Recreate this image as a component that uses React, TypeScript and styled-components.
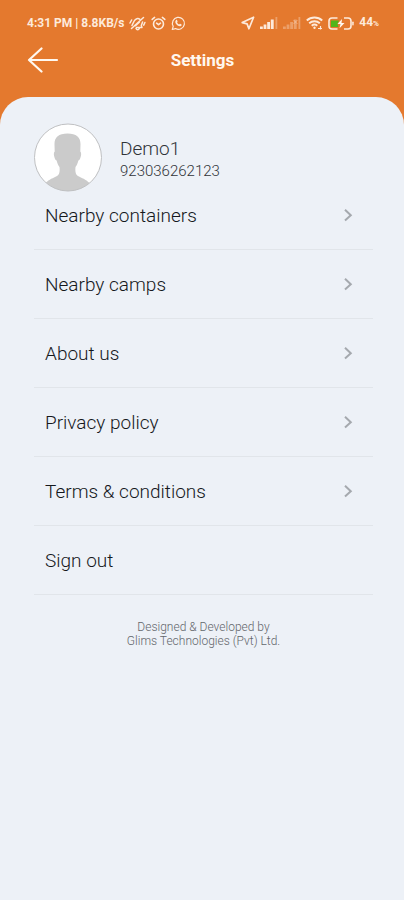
import React from "react";
import styled, { createGlobalStyle } from "styled-components";

const GlobalStyle = createGlobalStyle`
  *, *::before, *::after { box-sizing: border-box; }
  body {
    margin: 0;
    background: #e4792e;
    font-family: Roboto, "Liberation Sans", sans-serif;
  }
`;

const Screen = styled.div`
  min-height: 100vh;
  display: flex;
  flex-direction: column;
  background: #e4792e;
`;

const StatusBar = styled.div`
  display: flex;
  align-items: center;
  justify-content: space-between;
  height: 29px;
  padding: 17px 25px 0 27px;
  color: #fdeadb;
  font-size: 12px;
  font-weight: 700;
  line-height: 14px;
`;

const StatusGroup = styled.div`
  display: flex;
  align-items: center;
  gap: 5px;
  white-space: nowrap;

  svg { display: block; flex: none; }
`;

const Percent = styled.small`
  font-size: 8px;
`;

const TopBar = styled.header`
  display: grid;
  grid-template-columns: 32px 1fr 32px;
  align-items: center;
  height: 68px;
  padding: 0 26px 6px 27px;
`;

const BackButton = styled.button`
  display: flex;
  padding: 0;
  border: 0;
  background: none;
  cursor: pointer;
`;

const Title = styled.h1`
  margin: 0;
  color: #fff8f0;
  font-size: 17px;
  font-weight: 700;
  line-height: 24px;
  text-align: center;
`;

const Sheet = styled.main`
  flex: 1;
  padding: 26px 31px 40px 34px;
  border-radius: 28px 28px 0 0;
  background: #edf1f7;
`;

const Profile = styled.section`
  display: flex;
  align-items: center;
  gap: 18px;
`;

const Avatar = styled.svg`
  display: block;
  flex: none;
  width: 68px;
  height: 69px;
`;

const ProfileText = styled.div`
  padding-top: 2px;
`;

const Name = styled.h2`
  margin: 0;
  color: #303338;
  font-size: 19px;
  font-weight: 300;
  line-height: 24px;
`;

const Phone = styled.p`
  margin: 0;
  color: #303338;
  font-size: 15px;
  font-weight: 300;
  line-height: 20px;
`;

const Menu = styled.ul`
  display: flex;
  flex-direction: column;
  gap: 11px;
  margin: 0;
  padding: 0;
  list-style: none;
`;

const MenuItem = styled.li`
  border-bottom: 1px solid #e1e5ea;
`;

const MenuButton = styled.button`
  display: flex;
  align-items: center;
  justify-content: space-between;
  width: 100%;
  padding: 12px 20px 22px 11px;
  border: 0;
  background: none;
  color: #15181c;
  font: inherit;
  font-size: 19px;
  font-weight: 300;
  line-height: 23px;
  text-align: left;
  cursor: pointer;
`;

const Credit = styled.footer`
  padding-top: 25px;
  color: #63666b;
  font-size: 12px;
  font-weight: 300;
  line-height: 14px;
  text-align: center;
`;

const MuteIcon = () => (
  <svg width="17" height="15" viewBox="0 0 17 15" fill="none" stroke="#fdeadb" strokeWidth="1.500" strokeLinecap="round" strokeLinejoin="round" aria-hidden="true">
    <path d="M3 9.500 5.200 5C6.500 2.500 9 2 11 3.300" />
    <path d="M13.600 6 12.300 9.500l.7 2H7.500M7 12.500c.7 1.500 2.600 1.500 3.300 0" />
    <path d="M2.500 12.500 14.500 1.500M1 7l1.600-3M15.900 6.500l-1.200 2.600M6.500 9.800l3.800-3.600" />
  </svg>
);

const AlarmIcon = () => (
  <svg width="15" height="15" viewBox="0 0 15 15" fill="none" stroke="#fdeadb" strokeWidth="1.600" strokeLinecap="round" strokeLinejoin="round" aria-hidden="true">
    <circle cx="7.500" cy="8" r="5" />
    <path d="m1.200 3.400 2.400-2M13.800 3.400l-2.400-2M5.600 7.200l1.900 1.500 2-1.500" />
  </svg>
);

const ChatIcon = () => (
  <svg width="15" height="15" viewBox="0 0 15 15" aria-hidden="true">
    <path d="m1.300 13.500.9-3.200a6 6 0 1 1 2.300 2.300Z" fill="none" stroke="#fdeadb" strokeWidth="1.200" strokeLinejoin="round" />
    <path d="M4.900 4.200c.5-.5 1-.4 1.200.1l.5 1.200c.1.400-.5.800-.5 1.100.4.900 1.100 1.500 2 1.900.4 0 .7-.8 1.100-.7l1.300.7c.4.300 0 1.200-.5 1.500-1.300.8-3.500-.2-4.700-1.700C4.300 7.100 3.900 5.400 4.900 4.200Z" fill="#fdeadb" />
  </svg>
);

const LocationIcon = () => (
  <svg width="14" height="14" viewBox="0 0 14 14" fill="none" stroke="#fdeadb" strokeWidth="1.700" strokeLinejoin="round" aria-hidden="true">
    <path d="M12.600 1.200 1.200 6.600l4.900 1.300 1.800 4.900Z" />
  </svg>
);

const SignalIcon = ({ faded = false }: { faded?: boolean }) => (
  <svg width="18" height="12" viewBox="0 0 18 12" fill="#fdeadb" aria-hidden="true">
    <g opacity={faded ? 0.35 : 1}>
      <rect x="0" y="9.500" width="2.800" height="2.500" />
      <rect x="3.600" y="7.500" width="2.800" height="4.500" />
      <rect x="7.200" y="5" width="2.800" height="7" />
      <rect x="10.800" y="2.500" width="2.900" height="9.500" />
    </g>
    <rect x="15.500" y="0" width="1.800" height="12" opacity="0.35" />
    {faded && <path d="m10.500 3 4 4m0-4-4 4" stroke="#fdeadb" strokeWidth="1" opacity="0.4" />}
  </svg>
);

const WifiIcon = () => (
  <svg width="17" height="14" viewBox="0 0 17 14" fill="none" stroke="#fdeadb" strokeWidth="1.900" aria-hidden="true">
    <path d="M.8 4.500c4.300-4 11.100-4 15.400 0M3.200 7.300c3-2.700 7.600-2.700 10.600 0M5.700 9.800c1.600-1.400 4-1.400 5.600 0" />
    <circle cx="8.500" cy="11.700" r="1.200" fill="#fdeadb" stroke="none" />
    <path d="M12 12.500h4M14.500 10v3.500" strokeWidth="1.200" />
  </svg>
);

const BatteryIcon = () => (
  <svg width="26" height="13" viewBox="0 0 26 13" aria-hidden="true">
    <path d="M9.500 1H4a3 3 0 0 0-3 3v5a3 3 0 0 0 3 3h5.500M16 1h4a3 3 0 0 1 3 3v5a3 3 0 0 1-3 3h-4" fill="none" stroke="#fdeadb" strokeWidth="1.600" />
    <path d="M3 3.500h8L9.500 7l1 3H3Z" fill="#4fb51b" />
    <path d="m14 2-4.500 5h3l-1 4.200L16.500 6h-3Z" fill="#fff8f0" />
    <rect x="24.200" y="4.500" width="1.500" height="4" rx=".7" fill="#fdeadb" />
  </svg>
);

const BackIcon = () => (
  <svg width="32" height="26" viewBox="0 0 32 26" fill="none" stroke="#fff8f0" strokeWidth="2.200" strokeLinecap="round" strokeLinejoin="round" aria-hidden="true">
    <path d="M30 13H2M14.500 1.500 2 13l12.500 11.500" />
  </svg>
);

const ChevronIcon = () => (
  <svg width="9" height="14" viewBox="0 0 9 14" fill="none" stroke="#a5a9ae" strokeWidth="2" aria-hidden="true">
    <path d="m1 .8 5.800 5.400L1 11.600" />
  </svg>
);

const AvatarPicture = () => (
  <Avatar viewBox="0 0 68 69" role="img" aria-label="Profile picture">
    <defs>
      <clipPath id="avatar-disc">
        <circle cx="34" cy="34.500" r="33.500" />
      </clipPath>
    </defs>
    <circle cx="34" cy="34.500" r="33.500" fill="#fff" />
    <path
      clipPath="url(#avatar-disc)"
      fill="#cbcbcb"
      d="M33.500 10.500c-9 0-13.200 4-13 11l.2 7c-1 1-1 2.500-.6 4.500.5 2.200 1.200 4 2.500 4.500.8 3 1.600 4.800 2.900 6.500.4 4 .2 7.500-2.500 9-4 2.300-7.500 3-11.500 7V70h44V60c-4-4-7.500-4.700-11.500-7-2.700-1.500-2.900-5-2.500-9 1.300-1.700 2.100-3.500 2.900-6.500 1.300-.5 2-2.300 2.500-4.500.4-2 .4-3.500-.6-4.500l.2-7c.2-7-4-11-13-11Z"
    />
    <circle cx="34" cy="34.500" r="33.500" fill="none" stroke="#bfc0c2" />
  </Avatar>
);

const menuItems = [
  { label: "Nearby containers", chevron: true },
  { label: "Nearby camps", chevron: true },
  { label: "About us", chevron: true },
  { label: "Privacy policy", chevron: true },
  { label: "Terms & conditions", chevron: true },
  { label: "Sign out", chevron: false },
];

export default function App() {
  return (
    <>
      <GlobalStyle />
      <Screen>
        <StatusBar>
          <StatusGroup>
            <span>4:31 PM | 8.8KB/s</span>
            <MuteIcon />
            <AlarmIcon />
            <ChatIcon />
          </StatusGroup>
          <StatusGroup>
            <LocationIcon />
            <SignalIcon />
            <SignalIcon faded />
            <WifiIcon />
            <BatteryIcon />
            <span>
              44<Percent>%</Percent>
            </span>
          </StatusGroup>
        </StatusBar>
        <TopBar>
          <BackButton type="button" aria-label="Back">
            <BackIcon />
          </BackButton>
          <Title>Settings</Title>
        </TopBar>
        <Sheet>
          <Profile>
            <AvatarPicture />
            <ProfileText>
              <Name>Demo1</Name>
              <Phone>923036262123</Phone>
            </ProfileText>
          </Profile>
          <Menu>
            {menuItems.map((item) => (
              <MenuItem key={item.label}>
                <MenuButton type="button">
                  {item.label}
                  {item.chevron && <ChevronIcon />}
                </MenuButton>
              </MenuItem>
            ))}
          </Menu>
          <Credit>
            Designed &amp; Developed by
            <br />
            Glims Technologies (Pvt) Ltd.
          </Credit>
        </Sheet>
      </Screen>
    </>
  );
}
